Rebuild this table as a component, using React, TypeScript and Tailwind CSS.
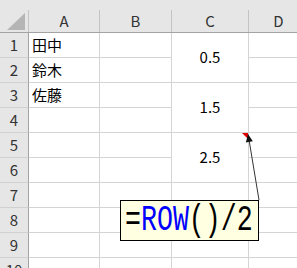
const columns = ["A", "B", "C", "D"];

// C column holds merged blocks of two rows each
const merged: Record<number, string> = { 1: "0.5", 3: "1.5", 5: "2.5" };
const names: Record<number, string> = { 1: "田中", 2: "鈴木", 3: "佐藤" };
const rows = [1, 2, 3, 4, 5, 6, 7, 8, 9, 10];

const font = { fontFamily: '"Noto Sans CJK JP", "Noto Sans", sans-serif' };

function CornerCell() {
  return (
    <div className="flex flex-col bg-[#e6e6e6] border-b border-[#a3a3a3]">
      <div className="h-[10px]" />
      <div className="flex-1 flex items-end justify-end pr-[3px] pb-[2px] border-r border-[#c4c4c4]">
        <svg width="18" height="17" viewBox="0 0 18 17">
          <polygon points="18,0 18,17 0,17" fill="#b5b5b5" />
        </svg>
      </div>
    </div>
  );
}

function ColumnHeader({ label }: { label: string }) {
  return (
    <div className="flex flex-col bg-[#e6e6e6] border-b border-[#a3a3a3]">
      <div className="h-[10px]" />
      <div className="flex-1 flex items-center justify-center border-r border-[#c4c4c4] text-[15px] text-[#333]">
        {label}
      </div>
    </div>
  );
}

function RowHeader({ n }: { n: number }) {
  return (
    <div className="flex items-center justify-center bg-[#e6e6e6] border-r border-b border-r-[#a3a3a3] border-b-[#d0d0d0] text-[15px] text-[#333]">
      {n}
    </div>
  );
}

function Cell({ children, span, note }: { children?: React.ReactNode; span?: boolean; note?: boolean }) {
  return (
    <div
      className={`relative flex items-center border-r border-b border-[#d4d4d4] text-[15px] text-black ${
        span ? "row-span-2 justify-center" : "pl-[3px]"
      }`}
    >
      {children}
      {note && (
        <svg className="absolute top-0 right-0" width="6" height="6" viewBox="0 0 6 6">
          <polygon points="0,0 6,0 6,6" fill="#e00000" />
        </svg>
      )}
    </div>
  );
}

export default function App() {
  return (
    <div className="relative w-[297px] h-[268px] overflow-hidden bg-white" style={font}>
      <div className="grid grid-cols-[29px_71px_72px_77px_60px] grid-rows-[33px_repeat(10,25px)]">
        <CornerCell />
        {columns.map((c) => (
          <ColumnHeader key={c} label={c} />
        ))}
        {rows.map((r) => {
          const cells = [
            <RowHeader key={`h${r}`} n={r} />,
            <Cell key={`a${r}`}>{names[r]}</Cell>,
            <Cell key={`b${r}`} />,
          ];
          if (merged[r]) {
            cells.push(
              <Cell key={`c${r}`} span note={r === 5}>
                {merged[r]}
              </Cell>
            );
          } else if (r > 6) {
            cells.push(<Cell key={`c${r}`} />);
          }
          cells.push(<Cell key={`d${r}`} />);
          return cells;
        })}
      </div>

      {/* comment callout */}
      <div className="absolute left-[120px] top-[200px] w-[139px] h-[41px] border border-black bg-[#ffffe1] flex items-center pl-[4px]">
        <span
          className="inline-block leading-none text-[26.6px] scale-y-[1.42] text-black"
          style={{ fontFamily: '"Liberation Mono", monospace' }}
        >
          =<span className="text-[#0000ff]">ROW</span>()/2
        </span>
      </div>
      <svg className="absolute inset-0 pointer-events-none" width="297" height="268">
        <line x1="259" y1="200" x2="249.3" y2="141.5" stroke="#333" strokeWidth="1" />
        <polygon points="248,134 252.8,141.3 245.9,142.5" fill="#111" />
      </svg>
    </div>
  );
}
